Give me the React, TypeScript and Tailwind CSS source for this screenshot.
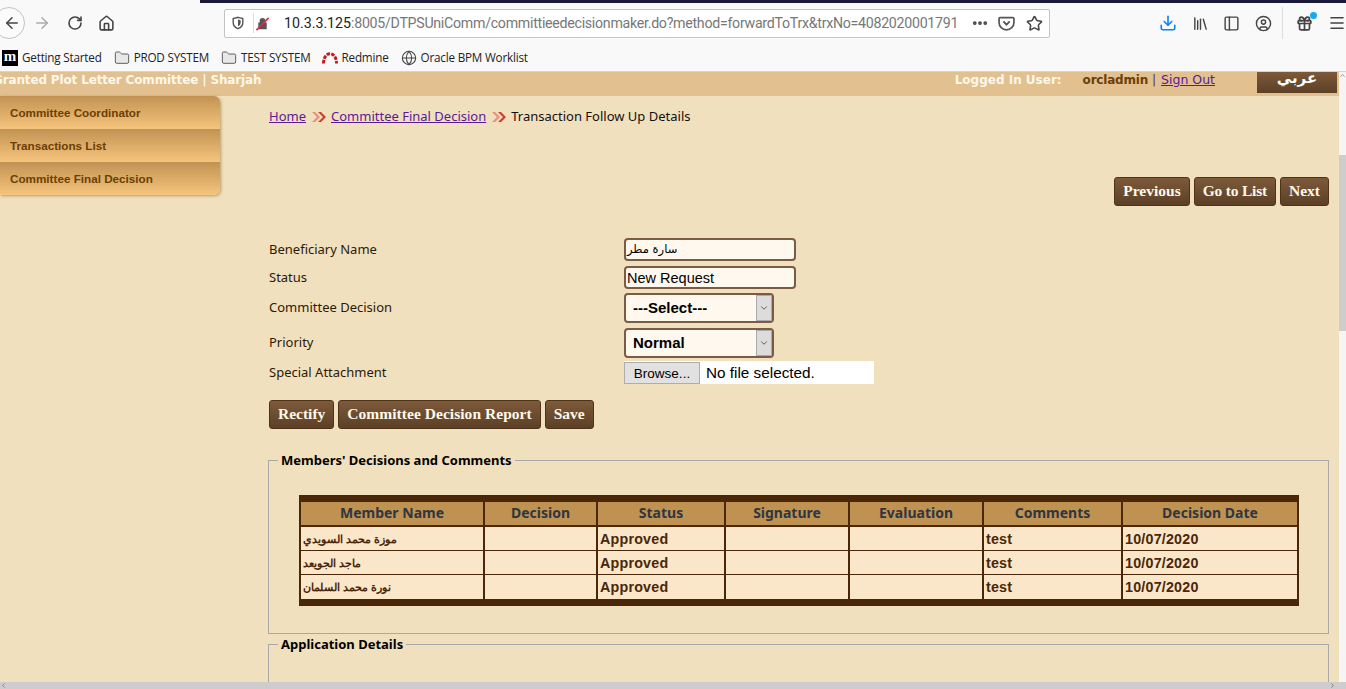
import { ArrowLeft, ArrowRight, RotateCw, House, Ellipsis, Star, Download, Library, PanelLeft, CircleUser, Gift, Menu, Globe, Folder, ChevronDown, ChevronRight, ChevronUp, ChevronLeft } from 'lucide-react'

const bookmarks = ['PROD SYSTEM', 'TEST SYSTEM']
const sideItems = ['Committee Coordinator', 'Transactions List', 'Committee Final Decision']
const columns = [
  { name: 'Member Name', width: 'w-[184px]' },
  { name: 'Decision', width: 'w-[113px]' },
  { name: 'Status', width: 'w-[128px]' },
  { name: 'Signature', width: 'w-[124px]' },
  { name: 'Evaluation', width: 'w-[134px]' },
  { name: 'Comments', width: 'w-[139px]' },
  { name: 'Decision Date', width: 'w-[174px]' }
]
const members = ['موزة محمد السويدي', 'ماجد الجويعد', 'نورة محمد السلمان']

function BrownButton({ label, className = '' }: { label: string; className?: string }) {
  return (
    <button className={`h-[29px] px-[8px] pb-[2px] rounded-[3px] border border-[#4f3318] bg-gradient-to-b from-[#7d5a3a] to-[#5c4026] text-[#fff8ea] font-['Liberation_Serif'] font-bold text-[15.5px] leading-none ${className}`}>
      {label}
    </button>
  )
}

function Crumbs() {
  return (
    <svg width="16" height="12" viewBox="0 0 16 12" className="mx-[4.5px] shrink-0">
      <path d="M1 1l5 5-5 5h3l5-5-5-5z" fill="#e88f80" />
      <path d="M7 1l5 5-5 5h3l5-5-5-5z" fill="#c9402f" />
    </svg>
  )
}

function BrowserChrome() {
  return (
    <div className="h-[72px] shrink-0 bg-[#f9f9fa] border-b border-[#d4d4d4] font-['Open_Sans'] text-[#2a2a2e] flex flex-col">
      <div className="h-[3px] flex">
        <div className="w-[200px]" />
        <div className="flex-1 bg-[#1a1a38]" />
      </div>
      <div className="h-[40px] flex items-center">
        <div className="relative -ml-[7px] w-[32px] h-[32px] rounded-full border border-[#c4c4c4] bg-[#fbfbfb] flex items-center justify-center shrink-0">
          <ArrowLeft className="w-[18px] h-[18px] ml-[6px] text-[#444]" />
        </div>
        <ArrowRight className="w-[18px] h-[18px] ml-[8px] text-[#aaa]" />
        <RotateCw className="w-[16px] h-[16px] ml-[16px] text-[#444]" strokeWidth={2.4} />
        <House className="w-[17px] h-[17px] ml-[15px] text-[#444]" strokeWidth={2.2} />
        <div className="ml-[109px] w-[826px] h-[29px] bg-white border border-[#c4c4c6] rounded-[2px] flex items-center shrink-0">
          <svg viewBox="0 0 16 16" className="w-[14px] h-[14px] ml-[6px] shrink-0">
            <path d="M8 1.500l5.500 1.500v4.500c0 3.500-2.500 6-5.500 7-3-1-5.500-3.500-5.500-7V3z" fill="none" stroke="#555" strokeWidth="1.600" />
            <path d="M8 4l3 .8v2.800c0 2-1.500 3.500-3 4.200z" fill="#555" />
          </svg>
          <div className="w-px h-[20px] bg-[#ddd] ml-[8px]" />
          <svg viewBox="0 0 16 16" className="w-[15px] h-[15px] ml-[1px] shrink-0">
            <path d="M5 7V5a3 3 0 0 1 6 0v2h1.500v7h-9V7z" fill="#555" />
            <path d="M1.500 15L14.500 2" stroke="#e22850" strokeWidth="1.800" />
          </svg>
          <div className="ml-[14px] flex-1 min-w-0 overflow-hidden whitespace-nowrap font-['Roboto'] text-[14.2px] leading-[20px] text-[#777]">
            <span className="text-[#222]">10.3.3.125</span>
            <span className="tracking-[-0.28px]">:8005/DTPSUniComm/committieedecisionmaker.do?method=forwardToTrx&amp;trxNo=4082020001791</span>
          </div>
          <Ellipsis className="w-[18px] h-[18px] ml-[6px] text-[#444]" strokeWidth={3} />
          <svg viewBox="0 0 16 16" className="w-[17px] h-[17px] ml-[9px] shrink-0">
            <path d="M2 2.500h12a1 1 0 0 1 1 1V7a7 7 0 0 1-14 0V3.500a1 1 0 0 1 1-1z" fill="none" stroke="#555" strokeWidth="1.600" />
            <path d="M5 6l3 3 3-3" fill="none" stroke="#555" strokeWidth="1.800" />
          </svg>
          <Star className="w-[17px] h-[17px] ml-[11px] mr-[6px] text-[#444]" strokeWidth={2.2} />
        </div>
        <Download className="w-[18px] h-[18px] ml-[109px] text-[#0a84ff] shrink-0" strokeWidth={2.2} />
        <Library className="w-[17px] h-[17px] ml-[15px] text-[#444] shrink-0" />
        <PanelLeft className="w-[17px] h-[17px] ml-[14px] text-[#444] shrink-0" />
        <CircleUser className="w-[17px] h-[17px] ml-[15px] text-[#444] shrink-0" />
        <div className="w-px h-[32px] bg-[#ddd] ml-[10px] shrink-0" />
        <div className="relative ml-[13px] shrink-0">
          <Gift className="w-[17px] h-[17px] text-[#444]" strokeWidth={2.4} />
          <div className="absolute -top-[3px] -right-[4px] w-[7px] h-[7px] rounded-full bg-[#18a8f0]" />
        </div>
        <Menu className="w-[18px] h-[18px] ml-[15px] text-[#444] shrink-0" strokeWidth={2.2} />
      </div>
      <div className="h-[28px] flex items-center text-[11.7px] text-[#222] tracking-[-0.2px] pl-[2px] pt-[2px]">
        <div className="w-[16px] h-[16px] bg-black text-white font-['Liberation_Serif'] font-bold text-[15px] leading-[13px] text-center shrink-0">m</div>
        <span className="ml-[4px]">Getting Started</span>
        {bookmarks.map((b) => (
          <span key={b} className="flex items-center ml-[12px]">
            <Folder className="w-[16px] h-[16px] text-[#555] fill-[#e8e8e8]" strokeWidth={1.4} />
            <span className="ml-[4px]">{b}</span>
          </span>
        ))}
        <svg viewBox="0 0 16 12" className="w-[16px] h-[12px] ml-[11px] shrink-0">
          <path d="M1.500 11.500C1.500 -1.500 14.500 -1.500 14.500 11.500" fill="none" stroke="#c8181f" strokeWidth="3" strokeDasharray="3.500 1.200" />
        </svg>
        <span className="ml-[4px]">Redmine</span>
        <Globe className="w-[16px] h-[16px] ml-[12px] text-[#444]" strokeWidth={1.6} />
        <span className="ml-[4px]">Oracle BPM Worklist</span>
      </div>
    </div>
  )
}

function Field({ label, className = '', children }: { label: string; className?: string; children: React.ReactNode }) {
  return (
    <div className={`flex items-center ${className}`}>
      <div className="w-[355px] shrink-0 font-['Noto_Sans'] text-[13px] text-[#2c1a08]">{label}</div>
      {children}
    </div>
  )
}

function SelectBox({ value }: { value: string }) {
  return (
    <div className="w-[150px] h-[30px] rounded-[4px] border-2 border-[#7a5c44] bg-[#fff8ee] flex items-stretch font-['Liberation_Sans'] font-bold text-[15px] text-black">
      <div className="flex-1 flex items-center pl-[7px]">{value}</div>
      <div className="w-[16px] bg-[#dcdcdc] border border-[#aaa] flex items-center justify-center">
        <ChevronDown className="w-[10px] h-[10px] text-[#444]" />
      </div>
    </div>
  )
}

export default function App() {
  return (
    <div className="w-[1346px] h-[689px] overflow-hidden flex flex-col bg-[#f1e0bd] font-['DejaVu_Sans'] relative">
      <BrowserChrome />
      <div className="flex-1 min-h-0 flex overflow-hidden">
        <div className="flex-1 min-w-0 overflow-hidden">
          <div className="h-[24px] bg-[#e2c08f] flex items-start pr-[2px] text-[12px] leading-[16px] font-bold text-[#fff8ea] whitespace-nowrap overflow-hidden">
            <span className="-ml-[7px] tracking-[-0.15px]">Granted Plot Letter Committee | Sharjah</span>
            <span className="ml-auto">Logged In User:</span>
            <span className="ml-[21px] tracking-[-0.2px] text-[#6d3f05]">orcladmin</span>
            <span className="ml-[4px] font-normal text-[#4d2a6f]">|</span>
            <span className="ml-[5px] font-normal text-[12.5px] text-[#5b1a9a] underline">Sign Out</span>
            <div className="ml-[42px] w-[80px] h-[21px] bg-gradient-to-b from-[#7d5a3a] to-[#5c4026] text-white text-[15px] leading-[13px] text-center overflow-hidden">عربي</div>
          </div>
          <div className="flex">
            <div className="w-[220px] shrink-0">
              <div className="rounded-r-[6px] overflow-hidden shadow-[1px_1px_3px_rgba(120,90,40,0.5)]">
                {sideItems.map((s) => (
                  <div key={s} className="h-[33px] bg-gradient-to-b from-[#c19353] to-[#f6c47c] pl-[10px] flex items-center font-['Liberation_Sans'] font-bold text-[11.7px] text-[#6b3f05]">
                    {s}
                  </div>
                ))}
              </div>
            </div>
            <div className="flex-1 min-w-0 pl-[48px] pr-[10px]">
              <div className="h-[20px] mt-[11px] pl-[1px] flex items-center font-['Noto_Sans'] text-[13px]">
                <span className="text-[#5b1a9a] underline">Home</span>
                <Crumbs />
                <span className="text-[#5b1a9a] underline">Committee Final Decision</span>
                <Crumbs />
                <span className="text-[#111]">Transaction Follow Up Details</span>
              </div>
              <div className="mt-[50px] flex justify-end gap-[4px]">
                <BrownButton label="Previous" />
                <BrownButton label="Go to List" className="tracking-[-0.2px]" />
                <BrownButton label="Next" />
              </div>
              <div className="mt-[32px] pl-[1px]">
                <Field label="Beneficiary Name">
                  <div className="w-[172px] h-[23px] rounded-[4px] border-2 border-[#7a5c44] bg-[#fff8ee] text-[11.5px] leading-[18px] text-black pl-[1px]">
                    <span>سارة مطر</span>
                  </div>
                </Field>
                <Field label="Status" className="mt-[5px]">
                  <div className="w-[172px] h-[23px] rounded-[4px] border-2 border-[#7a5c44] bg-[#fff8ee] font-['Liberation_Sans'] text-[14.5px] leading-[20px] text-black pl-[1px]">New Request</div>
                </Field>
                <Field label="Committee Decision" className="mt-[4px]">
                  <SelectBox value="---Select---" />
                </Field>
                <Field label="Priority" className="mt-[5px]">
                  <SelectBox value="Normal" />
                </Field>
                <Field label="Special Attachment" className="mt-[3px]">
                  <div className="w-[250px] h-[23px] bg-white flex items-center font-['Liberation_Sans'] text-[15.3px] text-black">
                    <div className="w-[76px] h-[22px] bg-[#e1e1e1] border border-[#adadad] text-center text-[13.5px] leading-[22px]">Browse...</div>
                    <span className="ml-[6px] pt-[2px]">No file selected.</span>
                  </div>
                </Field>
              </div>
              <div className="mt-[16px] pl-[1px] flex gap-[4px]">
                <BrownButton label="Rectify" />
                <BrownButton label="Committee Decision Report" className="tracking-[0.04px]" />
                <BrownButton label="Save" />
              </div>
              <fieldset className="mt-[24px] h-[181px] border border-[#a9a9a9] min-w-0">
                <legend className="ml-[9px] px-[3px] font-['Noto_Sans'] font-bold text-[13px] leading-[15px] text-black">Members' Decisions and Comments</legend>
                <div className="pl-[30px] pr-[29px]">
                  <table className="mt-[27px] w-[1000px] table-fixed border-separate border-spacing-0 border-x-2 border-y-[7px] border-[#4a2709]">
                    <thead>
                      <tr>
                        {columns.map((c) => (
                          <th key={c.name} className={`${c.width} h-[25px] pb-[2px] bg-[#c09252] border-r-2 last:border-r-0 border-b-2 border-[#4a2709] text-center font-['Noto_Sans'] text-[14px] font-bold text-[#2f3640]`}>{c.name}</th>
                        ))}
                      </tr>
                    </thead>
                    <tbody className="font-['Liberation_Sans'] font-bold text-[14.3px] leading-[18px] tracking-[0.2px] text-[#4a2709]">
                      {members.map((m, i) => {
                        const cell = `h-[24px] bg-[#fae6c9] border-[#4a2709] border-r-2 ${i < members.length - 1 ? 'border-b' : ''}`
                        return (
                          <tr key={m}>
                            <td className={`${cell} pl-[2px] text-[11px] leading-[18px] tracking-normal`}><span dir="rtl">{m}</span></td>
                            <td className={cell} />
                            <td className={`${cell} pl-[2px]`}>Approved</td>
                            <td className={cell} />
                            <td className={cell} />
                            <td className={`${cell} pl-[2px]`}>test</td>
                            <td className={`h-[24px] bg-[#fae6c9] border-[#4a2709] ${i < members.length - 1 ? 'border-b' : ''} pl-[2px]`}>10/07/2020</td>
                          </tr>
                        )
                      })}
                    </tbody>
                  </table>
                </div>
              </fieldset>
              <fieldset className="mt-[3px] h-[80px] border border-[#a9a9a9] min-w-0">
                <legend className="ml-[9px] px-[3px] font-['Noto_Sans'] font-bold text-[13px] leading-[15px] text-black">Application Details</legend>
              </fieldset>
            </div>
          </div>
        </div>
        <div className="w-[7px] shrink-0 bg-[#f5f5f5] flex flex-col items-center">
          <ChevronUp className="w-[7px] h-[7px] text-[#555]" />
          <div className="mt-[76px] w-full h-[176px] bg-[#cdcdcd]" />
        </div>
      </div>
      <div className="h-[7px] shrink-0 bg-[#cdcdcd] flex items-center justify-between">
        <ChevronLeft className="w-[7px] h-[7px] text-[#555]" />
        <ChevronRight className="w-[7px] h-[7px] text-[#555] mr-[10px]" />
      </div>
    </div>
  )
}
